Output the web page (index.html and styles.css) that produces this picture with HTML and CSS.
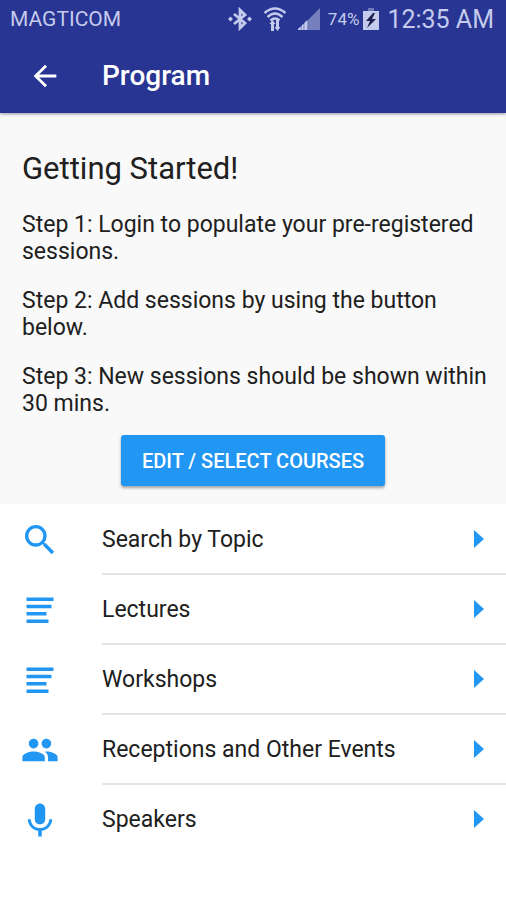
FILE: index.html
```html
<!DOCTYPE html>
<html lang="en">
<head>
<meta charset="utf-8">
<meta name="viewport" content="width=device-width, initial-scale=1">
<title>Program</title>
<link rel="stylesheet" href="styles.css">
</head>
<body>
<svg class="sprite" aria-hidden="true">
  <symbol id="lines" viewBox="0 0 40 40"><path d="M6.500 7.500h27v3.500h-27zM6.500 14.800h25v3.500h-25zM6.500 22.100h20v3.500h-20zM6.500 29.400h22v3.500h-22z"/></symbol>
  <symbol id="arrow" viewBox="0 0 10 18"><path d="M0 0l10 9-10 9z"/></symbol>
</svg>
<header class="header">
  <div class="status">
    <span class="carrier">MAGTICOM</span>
    <svg class="bluetooth" viewBox="0 0 24 24" aria-hidden="true"><path d="M6 7l11 9-5 5V3l5 5-11 9" fill="none" stroke="currentColor" stroke-width="2.800"/><path d="M2.500 9.500L5 12l-2.500 2.500L0 12zM21.500 9.500L24 12l-2.500 2.500L19 12z"/></svg>
    <svg class="wifi" viewBox="0 0 24 26" aria-hidden="true"><path d="M1.500 7Q12-2 22.500 7M4.500 11Q12 4 19.500 11M7.500 14.500q4.500-4 9 0" fill="none" stroke="currentColor" stroke-width="2.400"/><path d="M9.500 14l3 4h-1.500v7H8v-7H6.500zM14.500 25l-3-4H13v-7h3v7h1.500z"/></svg>
    <svg class="signal" viewBox="0 0 24 24" aria-hidden="true"><path d="M24 0v24H0z" opacity=".5"/><path d="M0 24v-1l3-3v4zM4 24v-5l2-2v7zM7 24v-8l3-3v11z"/></svg>
    <span class="percent">74%</span>
    <svg class="battery" viewBox="0 0 16 22" aria-hidden="true"><path d="M5 0h6v3H5z" opacity=".45"/><path d="M0 3h16v19H0z"/><path class="bolt" d="M10 5L3 13h4l-3 7 9-9H9l3-6z"/></svg>
    <span class="clock">12:35 AM</span>
  </div>
  <div class="bar">
    <button class="back" type="button" aria-label="Back"><svg viewBox="0 0 24 24"><path d="M20 11H7.830l5.590-5.590L12 4l-8 8 8 8 1.410-1.410L7.830 13H20z"/></svg></button>
    <h1 class="title">Program</h1>
  </div>
</header>
<main>
  <section class="intro">
    <h2 class="heading">Getting Started!</h2>
    <p class="step">Step 1: Login to populate your pre-registered sessions.</p>
    <p class="step">Step 2: Add sessions by using the button below.</p>
    <p class="step">Step 3: New sessions should be shown within 30 mins.</p>
    <button class="action" type="button">EDIT / SELECT COURSES</button>
  </section>
  <nav class="list" aria-label="Program">
    <a class="row" href="#topic"><svg class="icon" viewBox="0 0 24 24"><path d="M15.500 14h-.790l-.280-.270A6.470 6.470 0 0 0 16 9.500 6.500 6.500 0 1 0 9.500 16c1.610 0 3.090-.590 4.230-1.570l.270.280v.790l5 4.990L20.490 19zm-6 0a4.500 4.500 0 1 1 0-9 4.500 4.500 0 0 1 0 9z"/></svg><span class="label">Search by Topic<svg class="arrow"><use href="#arrow"/></svg></span></a>
    <a class="row" href="#lectures"><svg class="icon"><use href="#lines"/></svg><span class="label">Lectures<svg class="arrow"><use href="#arrow"/></svg></span></a>
    <a class="row" href="#workshops"><svg class="icon"><use href="#lines"/></svg><span class="label">Workshops<svg class="arrow"><use href="#arrow"/></svg></span></a>
    <a class="row" href="#events"><svg class="icon" viewBox="-.500 -.500 25 25"><path d="M16 11c1.660 0 2.990-1.340 2.990-3S17.660 5 16 5s-3 1.340-3 3 1.340 3 3 3zm-8 0c1.660 0 2.990-1.340 2.990-3S9.660 5 8 5 5 6.340 5 8s1.340 3 3 3zm0 2c-2.330 0-7 1.170-7 3.500V19h14v-2.500C15 14.170 10.330 13 8 13zm8 0c-.290 0-.620.020-.970.050C16.190 13.890 17 15.020 17 16.500V19h6v-2.500c0-2.330-4.670-3.500-7-3.500z"/></svg><span class="label">Receptions and Other Events<svg class="arrow"><use href="#arrow"/></svg></span></a>
    <a class="row" href="#speakers"><svg class="icon" viewBox=".500 0 23 23"><path d="M12 14c1.660 0 3-1.340 3-3V5c0-1.660-1.340-3-3-3S9 3.340 9 5v6c0 1.660 1.340 3 3 3zm5.300-3c0 3-2.540 5.100-5.300 5.100S6.700 14 6.700 11H5c0 3.410 2.720 6.230 6 6.720V21h2v-3.280c3.280-.490 6-3.310 6-6.720z"/></svg><span class="label">Speakers<svg class="arrow"><use href="#arrow"/></svg></span></a>
  </nav>
</main>
</body>
</html>
```
FILE: styles.css
```css
* { box-sizing: border-box; }
body { margin: 0; background: #fff; color: #202020; font-family: Roboto, sans-serif; }
svg { display: block; flex: none; fill: currentColor; }
button { padding: 0; border: 0; font: inherit; color: inherit; }
.sprite { position: absolute; width: 0; height: 0; }

.header { position: relative; background: #283593; color: #fff; box-shadow: 0 1px 3px rgba(0, 0, 0, .4); }
.status { display: flex; align-items: center; height: 38px; padding: 0 12px 0 10px; color: #c5cbec; }
.carrier { margin-right: auto; font-size: 21px; }
.bluetooth { width: 24px; height: 24px; margin-right: 11px; }
.wifi { width: 24px; height: 26px; margin-right: 11px; }
.signal { width: 22px; height: 22px; margin-right: 8px; }
.percent { margin-right: 4px; font-size: 17px; }
.battery { width: 16px; height: 22px; margin-right: 8px; }
.bolt { fill: #1b2050; }
.clock { font-size: 25px; }
.bar { display: flex; align-items: center; height: 75px; padding: 0 28px; }
.back { width: 34px; height: 34px; margin-right: 40px; background: none; cursor: pointer; }
.title { margin: 0; font-size: 28px; line-height: 32px; font-weight: 500; }

.intro { padding: 36px 16px 18px; background: #f9f9f9; }
.heading { margin: 0 0 22px; padding-left: 6px; font-size: 31px; line-height: 40px; font-weight: 400; }
.step { margin: 0 0 22px; padding-left: 6px; font-size: 23px; line-height: 27px; }
.action { display: block; height: 51px; margin: -4px auto 0; padding: 0 21px; border-radius: 3px; background: #2196f3; color: #fff; font-size: 20px; font-weight: 500; box-shadow: 0 2px 3px rgba(0, 0, 0, .35); cursor: pointer; }

.list { padding-top: 1px; }
.row { display: flex; align-items: center; color: inherit; text-decoration: none; }
.icon { width: 40px; height: 40px; margin: 0 42px 0 20px; color: #2196f3; }
.label { display: flex; flex: 1; align-items: center; justify-content: space-between; height: 70px; padding-right: 22px; border-bottom: 2px solid #e4e4e4; font-size: 23px; }
.row:last-child .label { border-color: transparent; }
.arrow { width: 10px; height: 18px; color: #2196f3; }
```
